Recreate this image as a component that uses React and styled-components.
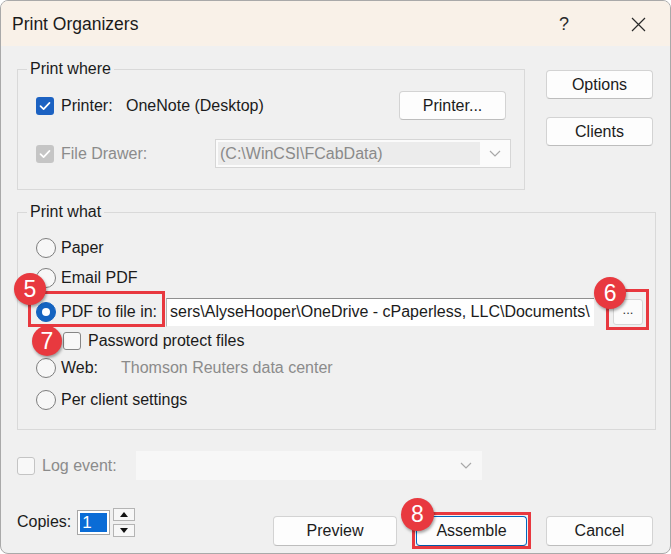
import React from 'react';
import styled, { createGlobalStyle } from 'styled-components';

const GlobalStyle = createGlobalStyle`
  html, body { margin: 0; padding: 0; background: #ffffff; }
  body { font-family: "Liberation Sans", Arial, sans-serif; }
  * { box-sizing: border-box; }
`;

const Frame = styled.div`
  width: 671px;
  height: 554px;
  border: 1px solid #a9a9a9;
  border-radius: 8px;
  overflow: hidden;
  background: #f0f0f0;
  display: flex;
  flex-direction: column;
  color: #1b1b1b;
  font-size: 16px;
`;

const TitleBar = styled.div`
  height: 45px;
  flex: none;
  display: flex;
  align-items: center;
  background: #f9f1e8;
  padding: 2px 0 0 11px;
`;

const Title = styled.div`
  flex: 1;
  font-size: 17.5px;
  color: #1a1a1a;
`;

const TitleButton = styled.div`
  width: ${p => p.$w}px;
  height: 43px;
  display: flex;
  align-items: center;
  justify-content: center;
  font-size: 18px;
  color: #2a2a2a;
`;

const Body = styled.div`
  padding: 14px 17px 0 16px;
`;

const TopRow = styled.div`
  display: flex;
  gap: 21px;
  align-items: flex-start;
`;

const Group = styled.fieldset`
  margin: ${p => p.$mt || 0}px 0 0 0;
  width: ${p => p.$w}px;
  min-width: 0;
  border: 1px solid #d9d9d9;
  padding: ${p => p.$pad};
`;

const Legend = styled.legend`
  padding: 0 3px;
  margin-left: -9px;
  font-size: 16px;
  line-height: 18px;
  color: #1b1b1b;
`;

const SideColumn = styled.div`
  display: flex;
  flex-direction: column;
  gap: 18px;
  margin-top: 10px;
`;

const Row = styled.div`
  display: flex;
  align-items: center;
  height: ${p => p.$h}px;
  margin-top: ${p => p.$mt || 0}px;
  padding-left: ${p => p.$indent || 0}px;
  position: relative;
`;

const Label = styled.span`
  width: ${p => (p.$w ? `${p.$w}px` : 'auto')};
  flex: none;
  white-space: nowrap;
  color: ${p => (p.$muted ? '#8b8b8b' : '#1b1b1b')};
`;

const Button = styled.button`
  width: ${p => p.$w}px;
  height: ${p => p.$h || 30}px;
  flex: none;
  margin-left: ${p => (p.$push ? 'auto' : '0')};
  margin-right: ${p => p.$mr || 0}px;
  background: #fdfdfd;
  border: 1px solid ${p => (p.$default ? '#0067c0' : '#d3d3d3')};
  border-bottom-color: ${p => (p.$default ? '#0058a8' : '#bdbdbd')};
  border-radius: 4px;
  font-family: "Liberation Sans", Arial, sans-serif;
  font-size: 16px;
  color: #1b1b1b;
  padding: 0;
  position: relative;
`;

const Box = styled.span`
  width: 18px;
  height: 18px;
  flex: none;
  border-radius: 3px;
  margin-right: 7px;
  display: inline-flex;
  align-items: center;
  justify-content: center;
  background: ${p => (p.$checked ? (p.$disabled ? '#c5c5c5' : '#1c62c2') : '#f8f8f8')};
  border: 1px solid ${p => (p.$checked ? 'transparent' : p.$disabled ? '#c4c4c4' : '#868686')};
`;

const Radio = styled.span`
  width: 20px;
  height: 20px;
  flex: none;
  border-radius: 50%;
  margin-right: 5px;
  display: inline-flex;
  align-items: center;
  justify-content: center;
  background: ${p => (p.$on ? '#1463c0' : '#f7f7f7')};
  border: 1.5px solid ${p => (p.$on ? '#1463c0' : '#7d7d7d')};
  &::after {
    content: '';
    display: ${p => (p.$on ? 'block' : 'none')};
    width: 8px;
    height: 8px;
    border-radius: 50%;
    background: #ffffff;
  }
`;

const Combo = styled.div`
  width: ${p => p.$w}px;
  height: 29px;
  flex: none;
  display: flex;
  align-items: stretch;
  background: ${p => (p.$bare ? '#f7f7f7' : '#fbfbfb')};
  border: 1px solid ${p => (p.$bare ? '#f7f7f7' : '#d6d6d6')};
`;

const ComboText = styled.div`
  flex: 1;
  margin: 2px 0 2px 2px;
  padding-left: 2px;
  display: flex;
  align-items: center;
  background: ${p => (p.$bare ? 'transparent' : '#ececec')};
  color: #8a8a8a;
  white-space: nowrap;
`;

const ComboArrow = styled.div`
  width: 30px;
  display: flex;
  align-items: center;
  justify-content: center;
`;

const PathField = styled.div`
  width: 428px;
  height: 29px;
  flex: none;
  margin-left: 9px;
  background: #ffffff;
  border-top: 1px solid #8f8f8f;
  border-left: 1px solid #b5b5b5;
  border-bottom: 1px solid #f0f0f0;
  display: flex;
  align-items: center;
  padding-left: 3px;
  overflow: hidden;
  white-space: nowrap;
`;

const Marked = styled.div`
  position: relative;
  display: flex;
  align-items: center;
  flex: none;
  margin-left: ${p => p.$ml || 0}px;
  &::after {
    content: '';
    position: absolute;
    inset: ${p => p.$inset};
    border: 3px solid #e8383f;
    pointer-events: none;
  }
`;

const Badge = styled.span`
  position: absolute;
  left: ${p => p.$x}px;
  top: ${p => p.$y}px;
  width: ${p => p.$d}px;
  height: ${p => p.$d}px;
  border-radius: 50%;
  background: #e8393f;
  color: #ffffff;
  font-family: "Liberation Sans", Arial, sans-serif;
  font-size: 23px;
  display: flex;
  align-items: center;
  justify-content: center;
  box-shadow: 1px 2px 3px rgba(0, 0, 0, 0.35);
  z-index: 2;
`;

const DotsButton = styled.button`
  width: 30px;
  height: 26px;
  padding: 0 0 6px;
  background: #fbfbfb;
  border: 1px solid #d6d6d6;
  border-radius: 3px;
  font-family: "Liberation Sans", Arial, sans-serif;
  font-size: 13px;
  color: #333;
`;

const BottomRow = styled.div`
  display: flex;
  align-items: flex-start;
  margin-top: 27px;
`;

const CopiesGroup = styled.div`
  display: flex;
  align-items: center;
  height: 30px;
`;

const CopiesInput = styled.div`
  width: 33px;
  height: 25px;
  margin-left: 6px;
  border: 1px solid #a6a6a6;
  padding: 2px;
  background: #ffffff;
`;

const Selected = styled.div`
  height: 100%;
  background: #0a6cd6;
  color: #ffffff;
  font-size: 17px;
  line-height: 19px;
  padding-left: 2px;
`;

const Spin = styled.div`
  display: flex;
  flex-direction: column;
  gap: 3px;
  margin-left: 3px;
`;

const SpinButton = styled.div`
  width: 22px;
  height: 13px;
  background: #f7f7f7;
  border: 1px solid #b4b4b4;
  display: flex;
  align-items: center;
  justify-content: center;
`;

const ButtonBar = styled.div`
  display: flex;
  gap: 19px;
  margin-left: auto;
  margin-top: 9px;
`;

const Check = () => (
  <svg width="14" height="14" viewBox="0 0 14 14">
    <path d="M2.5 7.2 L5.6 10.2 L11.5 3.8" fill="none" stroke="#ffffff" strokeWidth="1.7" strokeLinecap="round" strokeLinejoin="round" />
  </svg>
);

const Chevron = () => (
  <svg width="12" height="7" viewBox="0 0 12 7">
    <polyline points="1,1 6,6 11,1" fill="none" stroke="#a8a8a8" strokeWidth="1.2" />
  </svg>
);

const Tri = ({ up }) => (
  <svg width="8" height="5" viewBox="0 0 8 5">
    <polygon points={up ? '0,5 4,0 8,5' : '0,0 8,0 4,5'} fill="#111" />
  </svg>
);

export default function App() {
  return (
    <>
      <GlobalStyle />
      <Frame>
        <TitleBar>
          <Title>Print Organizers</Title>
          <TitleButton $w={84}>?</TitleButton>
          <TitleButton $w={64}>
            <svg width="15" height="15" viewBox="0 0 15 15">
              <path d="M1 1 L14 14 M14 1 L1 14" stroke="#2a2a2a" strokeWidth="1.2" />
            </svg>
          </TitleButton>
        </TitleBar>

        <Body>
          <TopRow>
            <Group $w={508} $pad="13px 13px 21px 18px">
              <Legend>Print where</Legend>
              <Row $h={29}>
                <Box $checked><Check /></Box>
                <Label $w={65}>Printer:</Label>
                <Label>OneNote (Desktop)</Label>
                <Button $w={107} $h={29} $push $mr={5}>Printer...</Button>
              </Row>
              <Row $h={29} $mt={19}>
                <Box $checked $disabled><Check /></Box>
                <Label $w={154} $muted>File Drawer:</Label>
                <Combo $w={296}>
                  <ComboText>(C:\WinCSI\FCabData)</ComboText>
                  <ComboArrow><Chevron /></ComboArrow>
                </Combo>
              </Row>
            </Group>
            <SideColumn>
              <Button $w={107} $h={29}>Options</Button>
              <Button $w={107} $h={29}>Clients</Button>
            </SideColumn>
          </TopRow>

          <Group $w={639} $mt={13} $pad="12px 12px 14px 18px">
            <Legend>Print what</Legend>
            <Row $h={30}>
              <Radio />
              <Label>Paper</Label>
            </Row>
            <Row $h={30}>
              <Radio />
              <Label>Email PDF</Label>
            </Row>
            <Row $h={38}>
              <Marked $inset="-11px -8px -5px -8px">
                <Badge $x={-22} $y={-29} $d={32}>5</Badge>
                <Radio $on />
                <Label>PDF to file in:</Label>
              </Marked>
              <PathField>sers\AlyseHooper\OneDrive - cPaperless, LLC\Documents\</PathField>
              <Marked $ml={19} $inset="-10px -6px -5px -7px">
                <Badge $x={-19} $y={-22} $d={32}>6</Badge>
                <DotsButton>...</DotsButton>
              </Marked>
            </Row>
            <Row $h={20} $indent={27}>
              <Badge $x={-4} $y={-5} $d={30}>7</Badge>
              <Box />
              <Label>Password protect files</Label>
            </Row>
            <Row $h={34}>
              <Radio />
              <Label $w={60}>Web:</Label>
              <Label $muted>Thomson Reuters data center</Label>
            </Row>
            <Row $h={30}>
              <Radio />
              <Label>Per client settings</Label>
            </Row>
          </Group>

          <Row $h={29} $mt={21}>
            <Box $disabled />
            <Label $w={94} $muted>Log event:</Label>
            <Combo $w={346} $bare>
              <ComboText $bare />
              <ComboArrow><Chevron /></ComboArrow>
            </Combo>
          </Row>

          <BottomRow>
            <CopiesGroup>
              <Label>Copies:</Label>
              <CopiesInput><Selected>1</Selected></CopiesInput>
              <Spin>
                <SpinButton><Tri up /></SpinButton>
                <SpinButton><Tri /></SpinButton>
              </Spin>
            </CopiesGroup>
            <ButtonBar>
              <Button $w={124}>Preview</Button>
              <Marked $inset="-4px -4px -3px -4px">
                <Badge $x={-15} $y={-18} $d={33}>8</Badge>
                <Button $w={111} $default>Assemble</Button>
              </Marked>
              <Button $w={107}>Cancel</Button>
            </ButtonBar>
          </BottomRow>
        </Body>
      </Frame>
    </>
  );
}
